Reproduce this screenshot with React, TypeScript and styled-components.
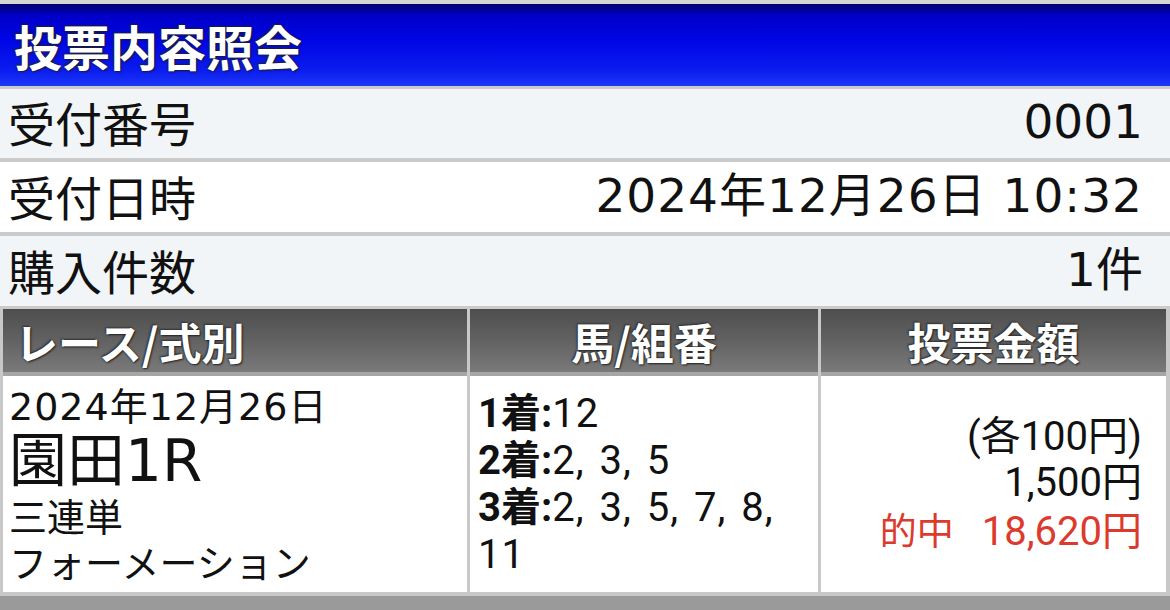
import React from "react";
import styled, { createGlobalStyle } from "styled-components";

const GlobalStyle = createGlobalStyle`
  body {
    margin: 0;
    background: #ffffff;
    font-family: "DejaVu Sans", "Noto Sans CJK JP", sans-serif;
    color: #111111;
  }
`;

const Page = styled.div`
  width: 1170px;
  height: 610px;
  overflow: hidden;
  border-top: 4px solid #d4d4d4;
  box-sizing: border-box;
  background: #9a9a9a;
`;

const TitleBar = styled.div`
  height: 82px;
  display: flex;
  align-items: center;
  padding-left: 14px;
  background: linear-gradient(
    to bottom,
    #00006a 0%,
    #0000c8 14%,
    #0006e6 45%,
    #0a1cef 80%,
    #1c36f6 100%
  );
  color: #ffffff;
  font-family: "Noto Sans CJK JP", sans-serif;
  font-size: 48px;
  font-weight: 700;
  text-shadow: 1px 1px 2px #1a1a2a, -1px -1px 2px #202030;
`;

const InfoRow = styled.div<{ $shade?: boolean; $border?: number; $h?: number }>`
  height: ${(p) => p.$h ?? 70}px;
  box-sizing: border-box;
  border-top: ${(p) => p.$border ?? 4}px solid #cbcbcb;
  background: ${(p) => (p.$shade ? "#f2f5f7" : "#ffffff")};
  display: flex;
  align-items: center;
  justify-content: space-between;
  padding: 0 27px 4px 8px;
  font-size: 47px;
  line-height: 1;
`;

const Label = styled.span`
  font-family: "Noto Sans CJK JP", sans-serif;
`;

const Value = styled.span<{ $wide?: boolean }>`
  letter-spacing: ${(p) => (p.$wide ? "1px" : "0")};
  white-space: pre;
`;

const Table = styled.div`
  border-top: 3px solid #cbcbcb;
  display: grid;
  grid-template-columns: 464px 348px 345px;
  grid-template-rows: 67px 216px;
  column-gap: 3px;
  padding: 0 4px 0 3px;
  background: #c8c8c8;
  border-bottom: 4px solid #c8c8c8;
`;

const HeadCell = styled.div<{ $left?: boolean }>`
  display: flex;
  align-items: center;
  justify-content: ${(p) => (p.$left ? "flex-start" : "center")};
  padding-left: ${(p) => (p.$left ? "12px" : "0")};
  background: linear-gradient(to bottom, #4e4e4e 0%, #626262 50%, #7a7a7a 100%);
  border-bottom: 4px solid #a6a6a6;
  color: #ffffff;
  font-family: "Noto Sans CJK JP", sans-serif;
  font-size: 43px;
  font-weight: 700;
  text-shadow: 1px 1px 2px #202020, -1px -1px 2px #303030;
`;

const BodyCell = styled.div<{ $align?: "left" | "right"; $pad?: number }>`
  background: #ffffff;
  display: flex;
  flex-direction: column;
  justify-content: center;
  align-items: ${(p) => (p.$align === "right" ? "flex-end" : "flex-start")};
  text-align: ${(p) => p.$align ?? "left"};
  padding: ${(p) =>
    p.$align === "right" ? "0 24px 0 0" : `0 0 0 ${p.$pad ?? 6}px`};
`;

const RaceLine = styled.div<{ $big?: boolean; $kana?: boolean }>`
  font-family: ${(p) =>
    p.$kana ? `"Noto Sans CJK JP", sans-serif` : `"DejaVu Sans", "Noto Sans CJK JP", sans-serif`};
  font-size: ${(p) => (p.$big ? "58px" : "38px")};
  line-height: ${(p) => (p.$big ? "62px" : "46px")};
  letter-spacing: ${(p) => (p.$big || p.$kana ? "0" : "1px")};
`;

const PickLine = styled.div`
  font-family: Roboto, "Noto Sans CJK JP", sans-serif;
  font-size: 40px;
  line-height: 47px;
  letter-spacing: 1px;
  word-spacing: 4px;
  white-space: nowrap;
`;

const Place = styled.b`
  font-weight: 700;
  letter-spacing: 0;
`;

const Amount = styled.div<{ $hit?: boolean }>`
  font-family: Roboto, "Noto Sans CJK JP", sans-serif;
  font-size: 40px;
  line-height: 46px;
  color: ${(p) => (p.$hit ? "#dc3a2c" : "#111111")};
  white-space: nowrap;
`;

const HitLabel = styled.span`
  margin-right: 28px;
  font-family: "Noto Sans CJK JP", sans-serif;
  font-size: 37px;
`;

const Footer = styled.div`
  height: 14px;
  background: #9a9a9a;
`;

const info = [
  { label: "受付番号", value: "0001", shade: true, border: 3, h: 72, wide: false },
  { label: "受付日時", value: "2024年12月26日 10:32", shade: false, border: 4, h: 74, wide: true },
  { label: "購入件数", value: "1件", shade: true, border: 4, h: 74, wide: false },
];

const picks = [
  { place: "1着:", nums: "12" },
  { place: "2着:", nums: "2, 3, 5" },
  { place: "3着:", nums: "2, 3, 5, 7, 8," },
  { place: "", nums: "11" },
];

export default function App() {
  return (
    <>
      <GlobalStyle />
      <Page>
        <TitleBar>投票内容照会</TitleBar>
        {info.map((r) => (
          <InfoRow key={r.label} $shade={r.shade} $border={r.border} $h={r.h}>
            <Label>{r.label}</Label>
            <Value $wide={r.wide}>{r.value}</Value>
          </InfoRow>
        ))}
        <Table>
          <HeadCell $left>レース/式別</HeadCell>
          <HeadCell>馬/組番</HeadCell>
          <HeadCell>投票金額</HeadCell>
          <BodyCell>
            <RaceLine>2024年12月26日</RaceLine>
            <RaceLine $big>園田1R</RaceLine>
            <RaceLine $kana>三連単</RaceLine>
            <RaceLine $kana>フォーメーション</RaceLine>
          </BodyCell>
          <BodyCell $pad={8}>
            {picks.map((p, i) => (
              <PickLine key={i}>
                {p.place && <Place>{p.place}</Place>}
                {p.nums}
              </PickLine>
            ))}
          </BodyCell>
          <BodyCell $align="right">
            <Amount>(各100円)</Amount>
            <Amount>1,500円</Amount>
            <Amount $hit>
              <HitLabel>的中</HitLabel>18,620円
            </Amount>
          </BodyCell>
        </Table>
        <Footer />
      </Page>
    </>
  );
}
